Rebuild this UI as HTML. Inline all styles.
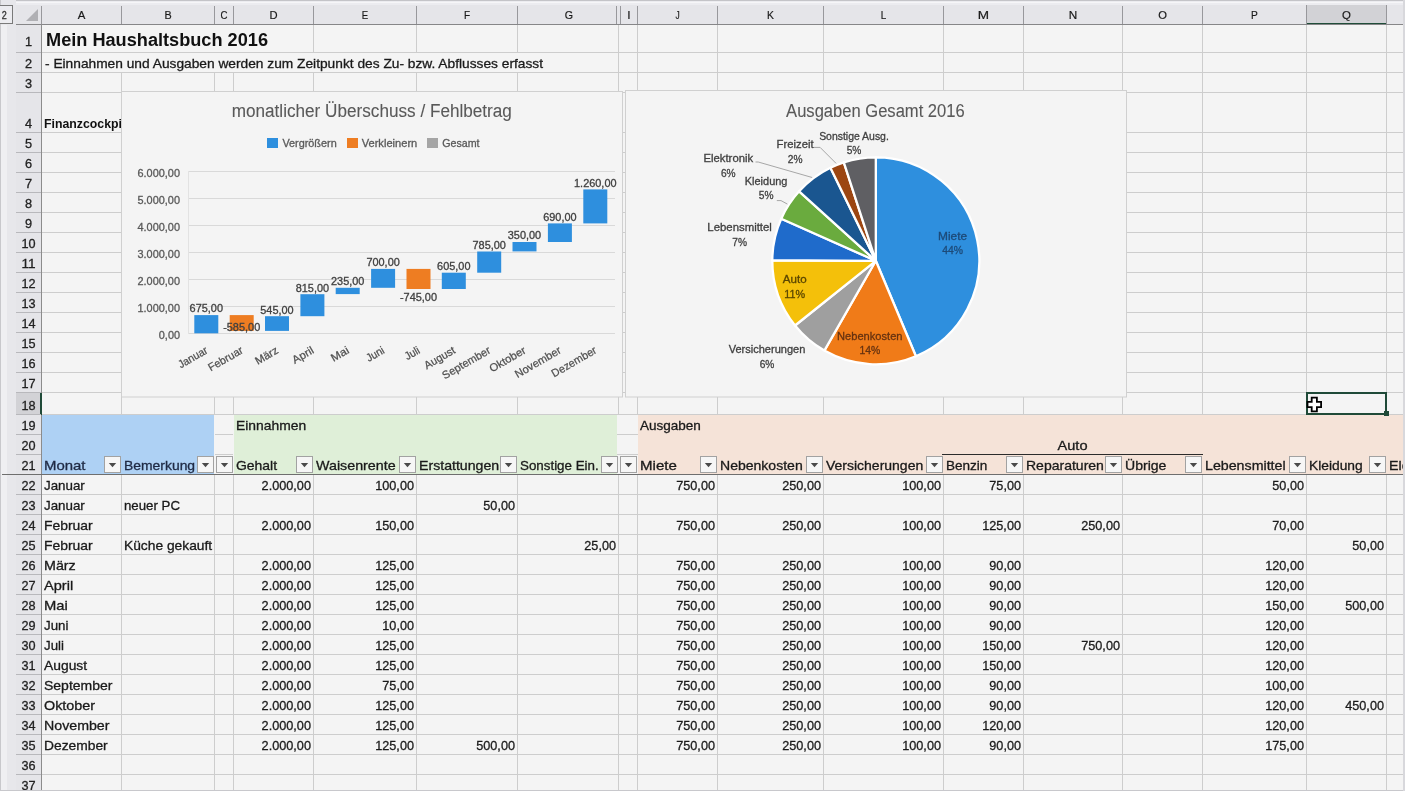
<!DOCTYPE html>
<html><head><meta charset="utf-8"><style>
html,body{margin:0;padding:0;width:1405px;height:791px;overflow:hidden;background:#f4f4f4}
svg{display:block;font-family:"Liberation Sans",sans-serif;will-change:transform}
</style></head><body>
<svg width="1405" height="791" viewBox="0 0 1405 791">
<rect x="0" y="0" width="1405" height="791" fill="#f4f4f4"/>
<rect x="41" y="52" width="1362" height="1" fill="#cdcdcd"/>
<rect x="41" y="72" width="1362" height="1" fill="#cdcdcd"/>
<rect x="41" y="92" width="1362" height="1" fill="#cdcdcd"/>
<rect x="41" y="132" width="1362" height="1" fill="#cdcdcd"/>
<rect x="41" y="152" width="1362" height="1" fill="#cdcdcd"/>
<rect x="41" y="172" width="1362" height="1" fill="#cdcdcd"/>
<rect x="41" y="192" width="1362" height="1" fill="#cdcdcd"/>
<rect x="41" y="212" width="1362" height="1" fill="#cdcdcd"/>
<rect x="41" y="232" width="1362" height="1" fill="#cdcdcd"/>
<rect x="41" y="252" width="1362" height="1" fill="#cdcdcd"/>
<rect x="41" y="272" width="1362" height="1" fill="#cdcdcd"/>
<rect x="41" y="292" width="1362" height="1" fill="#cdcdcd"/>
<rect x="41" y="312" width="1362" height="1" fill="#cdcdcd"/>
<rect x="41" y="332" width="1362" height="1" fill="#cdcdcd"/>
<rect x="41" y="352" width="1362" height="1" fill="#cdcdcd"/>
<rect x="41" y="372" width="1362" height="1" fill="#cdcdcd"/>
<rect x="41" y="392" width="1362" height="1" fill="#cdcdcd"/>
<rect x="41" y="414" width="1362" height="1" fill="#cdcdcd"/>
<rect x="41" y="434" width="1362" height="1" fill="#cdcdcd"/>
<rect x="41" y="454" width="1362" height="1" fill="#cdcdcd"/>
<rect x="41" y="474" width="1362" height="1" fill="#cdcdcd"/>
<rect x="41" y="494" width="1362" height="1" fill="#cdcdcd"/>
<rect x="41" y="514" width="1362" height="1" fill="#cdcdcd"/>
<rect x="41" y="534" width="1362" height="1" fill="#cdcdcd"/>
<rect x="41" y="554" width="1362" height="1" fill="#cdcdcd"/>
<rect x="41" y="574" width="1362" height="1" fill="#cdcdcd"/>
<rect x="41" y="594" width="1362" height="1" fill="#cdcdcd"/>
<rect x="41" y="614" width="1362" height="1" fill="#cdcdcd"/>
<rect x="41" y="634" width="1362" height="1" fill="#cdcdcd"/>
<rect x="41" y="654" width="1362" height="1" fill="#cdcdcd"/>
<rect x="41" y="674" width="1362" height="1" fill="#cdcdcd"/>
<rect x="41" y="694" width="1362" height="1" fill="#cdcdcd"/>
<rect x="41" y="714" width="1362" height="1" fill="#cdcdcd"/>
<rect x="41" y="734" width="1362" height="1" fill="#cdcdcd"/>
<rect x="41" y="754" width="1362" height="1" fill="#cdcdcd"/>
<rect x="41" y="774" width="1362" height="1" fill="#cdcdcd"/>
<rect x="121" y="25" width="1" height="766" fill="#cdcdcd"/>
<rect x="214" y="25" width="1" height="766" fill="#cdcdcd"/>
<rect x="233" y="25" width="1" height="766" fill="#cdcdcd"/>
<rect x="313" y="25" width="1" height="766" fill="#cdcdcd"/>
<rect x="416" y="25" width="1" height="766" fill="#cdcdcd"/>
<rect x="517" y="25" width="1" height="766" fill="#cdcdcd"/>
<rect x="618" y="25" width="1" height="766" fill="#cdcdcd"/>
<rect x="637" y="25" width="1" height="766" fill="#cdcdcd"/>
<rect x="717" y="25" width="1" height="766" fill="#cdcdcd"/>
<rect x="823" y="25" width="1" height="766" fill="#cdcdcd"/>
<rect x="943" y="25" width="1" height="766" fill="#cdcdcd"/>
<rect x="1023" y="25" width="1" height="766" fill="#cdcdcd"/>
<rect x="1122" y="25" width="1" height="766" fill="#cdcdcd"/>
<rect x="1202" y="25" width="1" height="766" fill="#cdcdcd"/>
<rect x="1306" y="25" width="1" height="766" fill="#cdcdcd"/>
<rect x="1386" y="25" width="1" height="766" fill="#cdcdcd"/>
<rect x="42" y="25" width="228" height="27" fill="#f4f4f4"/>
<rect x="42" y="53" width="503" height="19" fill="#f4f4f4"/>
<rect x="42" y="415" width="173" height="59" fill="#aed1f4"/>
<rect x="233" y="415" width="384" height="59" fill="#dfefd8"/>
<rect x="617" y="415" width="21" height="59" fill="#f4f4f4"/>
<rect x="214" y="415" width="20" height="59" fill="#f4f4f4"/>
<rect x="215" y="434" width="18" height="1" fill="#cdcdcd"/>
<rect x="617" y="434" width="21" height="1" fill="#cdcdcd"/>
<rect x="215" y="454" width="18" height="1" fill="#cdcdcd"/>
<rect x="617" y="454" width="21" height="1" fill="#cdcdcd"/>
<rect x="638" y="415" width="765" height="59" fill="#f5e3d8"/>
<text x="46.0" y="45.6" font-size="17.6" fill="#111" font-weight="bold" textLength="222.0" lengthAdjust="spacingAndGlyphs">Mein Haushaltsbuch 2016</text>
<text x="45.0" y="67.5" font-size="13" fill="#1a1a1a" textLength="498.0" lengthAdjust="spacingAndGlyphs" stroke="#1a1a1a" stroke-width="0.3">- Einnahmen und Ausgaben werden zum Zeitpunkt des Zu- bzw. Abflusses erfasst</text>
<text x="44.0" y="128.0" font-size="13" fill="#111" font-weight="bold" textLength="82.0" lengthAdjust="spacingAndGlyphs">Finanzcockpit</text>
<text x="236.0" y="430.0" font-size="13" fill="#1a1a1a" textLength="70.1" lengthAdjust="spacingAndGlyphs" stroke="#1a1a1a" stroke-width="0.3">Einnahmen</text>
<text x="640.0" y="430.0" font-size="13" fill="#1a1a1a" textLength="60.9" lengthAdjust="spacingAndGlyphs" stroke="#1a1a1a" stroke-width="0.3">Ausgaben</text>
<text x="1072.5" y="449.5" font-size="13" fill="#1a1a1a" text-anchor="middle" textLength="30.0" lengthAdjust="spacingAndGlyphs" stroke="#1a1a1a" stroke-width="0.3">Auto</text>
<rect x="942" y="454" width="261" height="1" fill="#2b2b2b"/>
<text x="44.0" y="470.0" font-size="13" fill="#1f2a44" textLength="41.5" lengthAdjust="spacingAndGlyphs" stroke="#1f2a44" stroke-width="0.3">Monat</text>
<rect x="104.5" y="456.5" width="16" height="16" fill="#f6f6f6" stroke="#a2a2a2" stroke-width="1"/>
<path d="M108.8,463 h7.4 l-3.7,4.2 z" fill="#4a4a4a"/>
<text x="124.0" y="470.0" font-size="13" fill="#1f2a44" textLength="71.1" lengthAdjust="spacingAndGlyphs" stroke="#1f2a44" stroke-width="0.3">Bemerkung</text>
<rect x="197.5" y="456.5" width="16" height="16" fill="#f6f6f6" stroke="#a2a2a2" stroke-width="1"/>
<path d="M201.8,463 h7.4 l-3.7,4.2 z" fill="#4a4a4a"/>
<rect x="216.5" y="456.5" width="16" height="16" fill="#f6f6f6" stroke="#a2a2a2" stroke-width="1"/>
<path d="M220.8,463 h7.4 l-3.7,4.2 z" fill="#4a4a4a"/>
<text x="236.0" y="470.0" font-size="13" fill="#1a1a1a" textLength="41.1" lengthAdjust="spacingAndGlyphs" stroke="#1a1a1a" stroke-width="0.3">Gehalt</text>
<rect x="296.5" y="456.5" width="16" height="16" fill="#f6f6f6" stroke="#a2a2a2" stroke-width="1"/>
<path d="M300.8,463 h7.4 l-3.7,4.2 z" fill="#4a4a4a"/>
<text x="316.0" y="470.0" font-size="13" fill="#1a1a1a" textLength="79.6" lengthAdjust="spacingAndGlyphs" stroke="#1a1a1a" stroke-width="0.3">Waisenrente</text>
<rect x="399.5" y="456.5" width="16" height="16" fill="#f6f6f6" stroke="#a2a2a2" stroke-width="1"/>
<path d="M403.8,463 h7.4 l-3.7,4.2 z" fill="#4a4a4a"/>
<text x="419.0" y="470.0" font-size="13" fill="#1a1a1a" textLength="80.2" lengthAdjust="spacingAndGlyphs" stroke="#1a1a1a" stroke-width="0.3">Erstattungen</text>
<rect x="500.5" y="456.5" width="16" height="16" fill="#f6f6f6" stroke="#a2a2a2" stroke-width="1"/>
<path d="M504.8,463 h7.4 l-3.7,4.2 z" fill="#4a4a4a"/>
<text x="520.0" y="470.0" font-size="13" fill="#1a1a1a" textLength="78.7" lengthAdjust="spacingAndGlyphs" stroke="#1a1a1a" stroke-width="0.3">Sonstige Ein.</text>
<rect x="601.5" y="456.5" width="16" height="16" fill="#f6f6f6" stroke="#a2a2a2" stroke-width="1"/>
<path d="M605.8,463 h7.4 l-3.7,4.2 z" fill="#4a4a4a"/>
<rect x="620.5" y="456.5" width="16" height="16" fill="#f6f6f6" stroke="#a2a2a2" stroke-width="1"/>
<path d="M624.8,463 h7.4 l-3.7,4.2 z" fill="#4a4a4a"/>
<text x="640.0" y="470.0" font-size="13" fill="#1a1a1a" textLength="36.8" lengthAdjust="spacingAndGlyphs" stroke="#1a1a1a" stroke-width="0.3">Miete</text>
<rect x="700.5" y="456.5" width="16" height="16" fill="#f6f6f6" stroke="#a2a2a2" stroke-width="1"/>
<path d="M704.8,463 h7.4 l-3.7,4.2 z" fill="#4a4a4a"/>
<text x="720.0" y="470.0" font-size="13" fill="#1a1a1a" textLength="82.7" lengthAdjust="spacingAndGlyphs" stroke="#1a1a1a" stroke-width="0.3">Nebenkosten</text>
<rect x="806.5" y="456.5" width="16" height="16" fill="#f6f6f6" stroke="#a2a2a2" stroke-width="1"/>
<path d="M810.8,463 h7.4 l-3.7,4.2 z" fill="#4a4a4a"/>
<text x="826.0" y="470.0" font-size="13" fill="#1a1a1a" textLength="97.2" lengthAdjust="spacingAndGlyphs" stroke="#1a1a1a" stroke-width="0.3">Versicherungen</text>
<rect x="926.5" y="456.5" width="16" height="16" fill="#f6f6f6" stroke="#a2a2a2" stroke-width="1"/>
<path d="M930.8,463 h7.4 l-3.7,4.2 z" fill="#4a4a4a"/>
<text x="946.0" y="470.0" font-size="13" fill="#1a1a1a" textLength="41.4" lengthAdjust="spacingAndGlyphs" stroke="#1a1a1a" stroke-width="0.3">Benzin</text>
<rect x="1006.5" y="456.5" width="16" height="16" fill="#f6f6f6" stroke="#a2a2a2" stroke-width="1"/>
<path d="M1010.8,463 h7.4 l-3.7,4.2 z" fill="#4a4a4a"/>
<text x="1026.0" y="470.0" font-size="13" fill="#1a1a1a" textLength="77.9" lengthAdjust="spacingAndGlyphs" stroke="#1a1a1a" stroke-width="0.3">Reparaturen</text>
<rect x="1105.5" y="456.5" width="16" height="16" fill="#f6f6f6" stroke="#a2a2a2" stroke-width="1"/>
<path d="M1109.8,463 h7.4 l-3.7,4.2 z" fill="#4a4a4a"/>
<text x="1125.0" y="470.0" font-size="13" fill="#1a1a1a" textLength="41.4" lengthAdjust="spacingAndGlyphs" stroke="#1a1a1a" stroke-width="0.3">Übrige</text>
<rect x="1185.5" y="456.5" width="16" height="16" fill="#f6f6f6" stroke="#a2a2a2" stroke-width="1"/>
<path d="M1189.8,463 h7.4 l-3.7,4.2 z" fill="#4a4a4a"/>
<text x="1205.0" y="470.0" font-size="13" fill="#1a1a1a" textLength="80.6" lengthAdjust="spacingAndGlyphs" stroke="#1a1a1a" stroke-width="0.3">Lebensmittel</text>
<rect x="1289.5" y="456.5" width="16" height="16" fill="#f6f6f6" stroke="#a2a2a2" stroke-width="1"/>
<path d="M1293.8,463 h7.4 l-3.7,4.2 z" fill="#4a4a4a"/>
<text x="1309.0" y="470.0" font-size="13" fill="#1a1a1a" textLength="53.7" lengthAdjust="spacingAndGlyphs" stroke="#1a1a1a" stroke-width="0.3">Kleidung</text>
<rect x="1369.5" y="456.5" width="16" height="16" fill="#f6f6f6" stroke="#a2a2a2" stroke-width="1"/>
<path d="M1373.8,463 h7.4 l-3.7,4.2 z" fill="#4a4a4a"/>
<text x="1389.0" y="470.0" font-size="13" fill="#1a1a1a" textLength="62.4" lengthAdjust="spacingAndGlyphs" stroke="#1a1a1a" stroke-width="0.3">Elektronik</text>
<text x="44.0" y="490.0" font-size="13" fill="#1a1a1a" textLength="40.8" lengthAdjust="spacingAndGlyphs" stroke="#1a1a1a" stroke-width="0.3">Januar</text>
<text x="311.0" y="490.0" font-size="13" fill="#1a1a1a" text-anchor="end" textLength="49.4" lengthAdjust="spacingAndGlyphs" stroke="#1a1a1a" stroke-width="0.3">2.000,00</text>
<text x="414.0" y="490.0" font-size="13" fill="#1a1a1a" text-anchor="end" textLength="38.8" lengthAdjust="spacingAndGlyphs" stroke="#1a1a1a" stroke-width="0.3">100,00</text>
<text x="715.0" y="490.0" font-size="13" fill="#1a1a1a" text-anchor="end" textLength="38.8" lengthAdjust="spacingAndGlyphs" stroke="#1a1a1a" stroke-width="0.3">750,00</text>
<text x="821.0" y="490.0" font-size="13" fill="#1a1a1a" text-anchor="end" textLength="38.8" lengthAdjust="spacingAndGlyphs" stroke="#1a1a1a" stroke-width="0.3">250,00</text>
<text x="941.0" y="490.0" font-size="13" fill="#1a1a1a" text-anchor="end" textLength="38.8" lengthAdjust="spacingAndGlyphs" stroke="#1a1a1a" stroke-width="0.3">100,00</text>
<text x="1021.0" y="490.0" font-size="13" fill="#1a1a1a" text-anchor="end" textLength="31.7" lengthAdjust="spacingAndGlyphs" stroke="#1a1a1a" stroke-width="0.3">75,00</text>
<text x="1304.0" y="490.0" font-size="13" fill="#1a1a1a" text-anchor="end" textLength="31.7" lengthAdjust="spacingAndGlyphs" stroke="#1a1a1a" stroke-width="0.3">50,00</text>
<text x="44.0" y="510.0" font-size="13" fill="#1a1a1a" textLength="40.8" lengthAdjust="spacingAndGlyphs" stroke="#1a1a1a" stroke-width="0.3">Januar</text>
<text x="124.0" y="510.0" font-size="13" fill="#1a1a1a" textLength="56.0" lengthAdjust="spacingAndGlyphs" stroke="#1a1a1a" stroke-width="0.3">neuer PC</text>
<text x="515.0" y="510.0" font-size="13" fill="#1a1a1a" text-anchor="end" textLength="31.7" lengthAdjust="spacingAndGlyphs" stroke="#1a1a1a" stroke-width="0.3">50,00</text>
<text x="44.0" y="530.0" font-size="13" fill="#1a1a1a" textLength="48.6" lengthAdjust="spacingAndGlyphs" stroke="#1a1a1a" stroke-width="0.3">Februar</text>
<text x="311.0" y="530.0" font-size="13" fill="#1a1a1a" text-anchor="end" textLength="49.4" lengthAdjust="spacingAndGlyphs" stroke="#1a1a1a" stroke-width="0.3">2.000,00</text>
<text x="414.0" y="530.0" font-size="13" fill="#1a1a1a" text-anchor="end" textLength="38.8" lengthAdjust="spacingAndGlyphs" stroke="#1a1a1a" stroke-width="0.3">150,00</text>
<text x="715.0" y="530.0" font-size="13" fill="#1a1a1a" text-anchor="end" textLength="38.8" lengthAdjust="spacingAndGlyphs" stroke="#1a1a1a" stroke-width="0.3">750,00</text>
<text x="821.0" y="530.0" font-size="13" fill="#1a1a1a" text-anchor="end" textLength="38.8" lengthAdjust="spacingAndGlyphs" stroke="#1a1a1a" stroke-width="0.3">250,00</text>
<text x="941.0" y="530.0" font-size="13" fill="#1a1a1a" text-anchor="end" textLength="38.8" lengthAdjust="spacingAndGlyphs" stroke="#1a1a1a" stroke-width="0.3">100,00</text>
<text x="1021.0" y="530.0" font-size="13" fill="#1a1a1a" text-anchor="end" textLength="38.8" lengthAdjust="spacingAndGlyphs" stroke="#1a1a1a" stroke-width="0.3">125,00</text>
<text x="1120.0" y="530.0" font-size="13" fill="#1a1a1a" text-anchor="end" textLength="38.8" lengthAdjust="spacingAndGlyphs" stroke="#1a1a1a" stroke-width="0.3">250,00</text>
<text x="1304.0" y="530.0" font-size="13" fill="#1a1a1a" text-anchor="end" textLength="31.7" lengthAdjust="spacingAndGlyphs" stroke="#1a1a1a" stroke-width="0.3">70,00</text>
<text x="44.0" y="550.0" font-size="13" fill="#1a1a1a" textLength="48.6" lengthAdjust="spacingAndGlyphs" stroke="#1a1a1a" stroke-width="0.3">Februar</text>
<text x="124.0" y="550.0" font-size="13" fill="#1a1a1a" textLength="88.2" lengthAdjust="spacingAndGlyphs" stroke="#1a1a1a" stroke-width="0.3">Küche gekauft</text>
<text x="616.0" y="550.0" font-size="13" fill="#1a1a1a" text-anchor="end" textLength="31.7" lengthAdjust="spacingAndGlyphs" stroke="#1a1a1a" stroke-width="0.3">25,00</text>
<text x="1384.0" y="550.0" font-size="13" fill="#1a1a1a" text-anchor="end" textLength="31.7" lengthAdjust="spacingAndGlyphs" stroke="#1a1a1a" stroke-width="0.3">50,00</text>
<text x="44.0" y="570.0" font-size="13" fill="#1a1a1a" textLength="31.7" lengthAdjust="spacingAndGlyphs" stroke="#1a1a1a" stroke-width="0.3">März</text>
<text x="311.0" y="570.0" font-size="13" fill="#1a1a1a" text-anchor="end" textLength="49.4" lengthAdjust="spacingAndGlyphs" stroke="#1a1a1a" stroke-width="0.3">2.000,00</text>
<text x="414.0" y="570.0" font-size="13" fill="#1a1a1a" text-anchor="end" textLength="38.8" lengthAdjust="spacingAndGlyphs" stroke="#1a1a1a" stroke-width="0.3">125,00</text>
<text x="715.0" y="570.0" font-size="13" fill="#1a1a1a" text-anchor="end" textLength="38.8" lengthAdjust="spacingAndGlyphs" stroke="#1a1a1a" stroke-width="0.3">750,00</text>
<text x="821.0" y="570.0" font-size="13" fill="#1a1a1a" text-anchor="end" textLength="38.8" lengthAdjust="spacingAndGlyphs" stroke="#1a1a1a" stroke-width="0.3">250,00</text>
<text x="941.0" y="570.0" font-size="13" fill="#1a1a1a" text-anchor="end" textLength="38.8" lengthAdjust="spacingAndGlyphs" stroke="#1a1a1a" stroke-width="0.3">100,00</text>
<text x="1021.0" y="570.0" font-size="13" fill="#1a1a1a" text-anchor="end" textLength="31.7" lengthAdjust="spacingAndGlyphs" stroke="#1a1a1a" stroke-width="0.3">90,00</text>
<text x="1304.0" y="570.0" font-size="13" fill="#1a1a1a" text-anchor="end" textLength="38.8" lengthAdjust="spacingAndGlyphs" stroke="#1a1a1a" stroke-width="0.3">120,00</text>
<text x="44.0" y="590.0" font-size="13" fill="#1a1a1a" textLength="29.2" lengthAdjust="spacingAndGlyphs" stroke="#1a1a1a" stroke-width="0.3">April</text>
<text x="311.0" y="590.0" font-size="13" fill="#1a1a1a" text-anchor="end" textLength="49.4" lengthAdjust="spacingAndGlyphs" stroke="#1a1a1a" stroke-width="0.3">2.000,00</text>
<text x="414.0" y="590.0" font-size="13" fill="#1a1a1a" text-anchor="end" textLength="38.8" lengthAdjust="spacingAndGlyphs" stroke="#1a1a1a" stroke-width="0.3">125,00</text>
<text x="715.0" y="590.0" font-size="13" fill="#1a1a1a" text-anchor="end" textLength="38.8" lengthAdjust="spacingAndGlyphs" stroke="#1a1a1a" stroke-width="0.3">750,00</text>
<text x="821.0" y="590.0" font-size="13" fill="#1a1a1a" text-anchor="end" textLength="38.8" lengthAdjust="spacingAndGlyphs" stroke="#1a1a1a" stroke-width="0.3">250,00</text>
<text x="941.0" y="590.0" font-size="13" fill="#1a1a1a" text-anchor="end" textLength="38.8" lengthAdjust="spacingAndGlyphs" stroke="#1a1a1a" stroke-width="0.3">100,00</text>
<text x="1021.0" y="590.0" font-size="13" fill="#1a1a1a" text-anchor="end" textLength="31.7" lengthAdjust="spacingAndGlyphs" stroke="#1a1a1a" stroke-width="0.3">90,00</text>
<text x="1304.0" y="590.0" font-size="13" fill="#1a1a1a" text-anchor="end" textLength="38.8" lengthAdjust="spacingAndGlyphs" stroke="#1a1a1a" stroke-width="0.3">120,00</text>
<text x="44.0" y="610.0" font-size="13" fill="#1a1a1a" textLength="23.8" lengthAdjust="spacingAndGlyphs" stroke="#1a1a1a" stroke-width="0.3">Mai</text>
<text x="311.0" y="610.0" font-size="13" fill="#1a1a1a" text-anchor="end" textLength="49.4" lengthAdjust="spacingAndGlyphs" stroke="#1a1a1a" stroke-width="0.3">2.000,00</text>
<text x="414.0" y="610.0" font-size="13" fill="#1a1a1a" text-anchor="end" textLength="38.8" lengthAdjust="spacingAndGlyphs" stroke="#1a1a1a" stroke-width="0.3">125,00</text>
<text x="715.0" y="610.0" font-size="13" fill="#1a1a1a" text-anchor="end" textLength="38.8" lengthAdjust="spacingAndGlyphs" stroke="#1a1a1a" stroke-width="0.3">750,00</text>
<text x="821.0" y="610.0" font-size="13" fill="#1a1a1a" text-anchor="end" textLength="38.8" lengthAdjust="spacingAndGlyphs" stroke="#1a1a1a" stroke-width="0.3">250,00</text>
<text x="941.0" y="610.0" font-size="13" fill="#1a1a1a" text-anchor="end" textLength="38.8" lengthAdjust="spacingAndGlyphs" stroke="#1a1a1a" stroke-width="0.3">100,00</text>
<text x="1021.0" y="610.0" font-size="13" fill="#1a1a1a" text-anchor="end" textLength="31.7" lengthAdjust="spacingAndGlyphs" stroke="#1a1a1a" stroke-width="0.3">90,00</text>
<text x="1304.0" y="610.0" font-size="13" fill="#1a1a1a" text-anchor="end" textLength="38.8" lengthAdjust="spacingAndGlyphs" stroke="#1a1a1a" stroke-width="0.3">150,00</text>
<text x="1384.0" y="610.0" font-size="13" fill="#1a1a1a" text-anchor="end" textLength="38.8" lengthAdjust="spacingAndGlyphs" stroke="#1a1a1a" stroke-width="0.3">500,00</text>
<text x="44.0" y="630.0" font-size="13" fill="#1a1a1a" textLength="24.4" lengthAdjust="spacingAndGlyphs" stroke="#1a1a1a" stroke-width="0.3">Juni</text>
<text x="311.0" y="630.0" font-size="13" fill="#1a1a1a" text-anchor="end" textLength="49.4" lengthAdjust="spacingAndGlyphs" stroke="#1a1a1a" stroke-width="0.3">2.000,00</text>
<text x="414.0" y="630.0" font-size="13" fill="#1a1a1a" text-anchor="end" textLength="31.7" lengthAdjust="spacingAndGlyphs" stroke="#1a1a1a" stroke-width="0.3">10,00</text>
<text x="715.0" y="630.0" font-size="13" fill="#1a1a1a" text-anchor="end" textLength="38.8" lengthAdjust="spacingAndGlyphs" stroke="#1a1a1a" stroke-width="0.3">750,00</text>
<text x="821.0" y="630.0" font-size="13" fill="#1a1a1a" text-anchor="end" textLength="38.8" lengthAdjust="spacingAndGlyphs" stroke="#1a1a1a" stroke-width="0.3">250,00</text>
<text x="941.0" y="630.0" font-size="13" fill="#1a1a1a" text-anchor="end" textLength="38.8" lengthAdjust="spacingAndGlyphs" stroke="#1a1a1a" stroke-width="0.3">100,00</text>
<text x="1021.0" y="630.0" font-size="13" fill="#1a1a1a" text-anchor="end" textLength="31.7" lengthAdjust="spacingAndGlyphs" stroke="#1a1a1a" stroke-width="0.3">90,00</text>
<text x="1304.0" y="630.0" font-size="13" fill="#1a1a1a" text-anchor="end" textLength="38.8" lengthAdjust="spacingAndGlyphs" stroke="#1a1a1a" stroke-width="0.3">120,00</text>
<text x="44.0" y="650.0" font-size="13" fill="#1a1a1a" textLength="19.9" lengthAdjust="spacingAndGlyphs" stroke="#1a1a1a" stroke-width="0.3">Juli</text>
<text x="311.0" y="650.0" font-size="13" fill="#1a1a1a" text-anchor="end" textLength="49.4" lengthAdjust="spacingAndGlyphs" stroke="#1a1a1a" stroke-width="0.3">2.000,00</text>
<text x="414.0" y="650.0" font-size="13" fill="#1a1a1a" text-anchor="end" textLength="38.8" lengthAdjust="spacingAndGlyphs" stroke="#1a1a1a" stroke-width="0.3">125,00</text>
<text x="715.0" y="650.0" font-size="13" fill="#1a1a1a" text-anchor="end" textLength="38.8" lengthAdjust="spacingAndGlyphs" stroke="#1a1a1a" stroke-width="0.3">750,00</text>
<text x="821.0" y="650.0" font-size="13" fill="#1a1a1a" text-anchor="end" textLength="38.8" lengthAdjust="spacingAndGlyphs" stroke="#1a1a1a" stroke-width="0.3">250,00</text>
<text x="941.0" y="650.0" font-size="13" fill="#1a1a1a" text-anchor="end" textLength="38.8" lengthAdjust="spacingAndGlyphs" stroke="#1a1a1a" stroke-width="0.3">100,00</text>
<text x="1021.0" y="650.0" font-size="13" fill="#1a1a1a" text-anchor="end" textLength="38.8" lengthAdjust="spacingAndGlyphs" stroke="#1a1a1a" stroke-width="0.3">150,00</text>
<text x="1120.0" y="650.0" font-size="13" fill="#1a1a1a" text-anchor="end" textLength="38.8" lengthAdjust="spacingAndGlyphs" stroke="#1a1a1a" stroke-width="0.3">750,00</text>
<text x="1304.0" y="650.0" font-size="13" fill="#1a1a1a" text-anchor="end" textLength="38.8" lengthAdjust="spacingAndGlyphs" stroke="#1a1a1a" stroke-width="0.3">120,00</text>
<text x="44.0" y="670.0" font-size="13" fill="#1a1a1a" textLength="43.1" lengthAdjust="spacingAndGlyphs" stroke="#1a1a1a" stroke-width="0.3">August</text>
<text x="311.0" y="670.0" font-size="13" fill="#1a1a1a" text-anchor="end" textLength="49.4" lengthAdjust="spacingAndGlyphs" stroke="#1a1a1a" stroke-width="0.3">2.000,00</text>
<text x="414.0" y="670.0" font-size="13" fill="#1a1a1a" text-anchor="end" textLength="38.8" lengthAdjust="spacingAndGlyphs" stroke="#1a1a1a" stroke-width="0.3">125,00</text>
<text x="715.0" y="670.0" font-size="13" fill="#1a1a1a" text-anchor="end" textLength="38.8" lengthAdjust="spacingAndGlyphs" stroke="#1a1a1a" stroke-width="0.3">750,00</text>
<text x="821.0" y="670.0" font-size="13" fill="#1a1a1a" text-anchor="end" textLength="38.8" lengthAdjust="spacingAndGlyphs" stroke="#1a1a1a" stroke-width="0.3">250,00</text>
<text x="941.0" y="670.0" font-size="13" fill="#1a1a1a" text-anchor="end" textLength="38.8" lengthAdjust="spacingAndGlyphs" stroke="#1a1a1a" stroke-width="0.3">100,00</text>
<text x="1021.0" y="670.0" font-size="13" fill="#1a1a1a" text-anchor="end" textLength="38.8" lengthAdjust="spacingAndGlyphs" stroke="#1a1a1a" stroke-width="0.3">150,00</text>
<text x="1304.0" y="670.0" font-size="13" fill="#1a1a1a" text-anchor="end" textLength="38.8" lengthAdjust="spacingAndGlyphs" stroke="#1a1a1a" stroke-width="0.3">120,00</text>
<text x="44.0" y="690.0" font-size="13" fill="#1a1a1a" textLength="68.4" lengthAdjust="spacingAndGlyphs" stroke="#1a1a1a" stroke-width="0.3">September</text>
<text x="311.0" y="690.0" font-size="13" fill="#1a1a1a" text-anchor="end" textLength="49.4" lengthAdjust="spacingAndGlyphs" stroke="#1a1a1a" stroke-width="0.3">2.000,00</text>
<text x="414.0" y="690.0" font-size="13" fill="#1a1a1a" text-anchor="end" textLength="31.7" lengthAdjust="spacingAndGlyphs" stroke="#1a1a1a" stroke-width="0.3">75,00</text>
<text x="715.0" y="690.0" font-size="13" fill="#1a1a1a" text-anchor="end" textLength="38.8" lengthAdjust="spacingAndGlyphs" stroke="#1a1a1a" stroke-width="0.3">750,00</text>
<text x="821.0" y="690.0" font-size="13" fill="#1a1a1a" text-anchor="end" textLength="38.8" lengthAdjust="spacingAndGlyphs" stroke="#1a1a1a" stroke-width="0.3">250,00</text>
<text x="941.0" y="690.0" font-size="13" fill="#1a1a1a" text-anchor="end" textLength="38.8" lengthAdjust="spacingAndGlyphs" stroke="#1a1a1a" stroke-width="0.3">100,00</text>
<text x="1021.0" y="690.0" font-size="13" fill="#1a1a1a" text-anchor="end" textLength="31.7" lengthAdjust="spacingAndGlyphs" stroke="#1a1a1a" stroke-width="0.3">90,00</text>
<text x="1304.0" y="690.0" font-size="13" fill="#1a1a1a" text-anchor="end" textLength="38.8" lengthAdjust="spacingAndGlyphs" stroke="#1a1a1a" stroke-width="0.3">100,00</text>
<text x="44.0" y="710.0" font-size="13" fill="#1a1a1a" textLength="51.1" lengthAdjust="spacingAndGlyphs" stroke="#1a1a1a" stroke-width="0.3">Oktober</text>
<text x="311.0" y="710.0" font-size="13" fill="#1a1a1a" text-anchor="end" textLength="49.4" lengthAdjust="spacingAndGlyphs" stroke="#1a1a1a" stroke-width="0.3">2.000,00</text>
<text x="414.0" y="710.0" font-size="13" fill="#1a1a1a" text-anchor="end" textLength="38.8" lengthAdjust="spacingAndGlyphs" stroke="#1a1a1a" stroke-width="0.3">125,00</text>
<text x="715.0" y="710.0" font-size="13" fill="#1a1a1a" text-anchor="end" textLength="38.8" lengthAdjust="spacingAndGlyphs" stroke="#1a1a1a" stroke-width="0.3">750,00</text>
<text x="821.0" y="710.0" font-size="13" fill="#1a1a1a" text-anchor="end" textLength="38.8" lengthAdjust="spacingAndGlyphs" stroke="#1a1a1a" stroke-width="0.3">250,00</text>
<text x="941.0" y="710.0" font-size="13" fill="#1a1a1a" text-anchor="end" textLength="38.8" lengthAdjust="spacingAndGlyphs" stroke="#1a1a1a" stroke-width="0.3">100,00</text>
<text x="1021.0" y="710.0" font-size="13" fill="#1a1a1a" text-anchor="end" textLength="31.7" lengthAdjust="spacingAndGlyphs" stroke="#1a1a1a" stroke-width="0.3">90,00</text>
<text x="1304.0" y="710.0" font-size="13" fill="#1a1a1a" text-anchor="end" textLength="38.8" lengthAdjust="spacingAndGlyphs" stroke="#1a1a1a" stroke-width="0.3">120,00</text>
<text x="1384.0" y="710.0" font-size="13" fill="#1a1a1a" text-anchor="end" textLength="38.8" lengthAdjust="spacingAndGlyphs" stroke="#1a1a1a" stroke-width="0.3">450,00</text>
<text x="44.0" y="730.0" font-size="13" fill="#1a1a1a" textLength="65.5" lengthAdjust="spacingAndGlyphs" stroke="#1a1a1a" stroke-width="0.3">November</text>
<text x="311.0" y="730.0" font-size="13" fill="#1a1a1a" text-anchor="end" textLength="49.4" lengthAdjust="spacingAndGlyphs" stroke="#1a1a1a" stroke-width="0.3">2.000,00</text>
<text x="414.0" y="730.0" font-size="13" fill="#1a1a1a" text-anchor="end" textLength="38.8" lengthAdjust="spacingAndGlyphs" stroke="#1a1a1a" stroke-width="0.3">125,00</text>
<text x="715.0" y="730.0" font-size="13" fill="#1a1a1a" text-anchor="end" textLength="38.8" lengthAdjust="spacingAndGlyphs" stroke="#1a1a1a" stroke-width="0.3">750,00</text>
<text x="821.0" y="730.0" font-size="13" fill="#1a1a1a" text-anchor="end" textLength="38.8" lengthAdjust="spacingAndGlyphs" stroke="#1a1a1a" stroke-width="0.3">250,00</text>
<text x="941.0" y="730.0" font-size="13" fill="#1a1a1a" text-anchor="end" textLength="38.8" lengthAdjust="spacingAndGlyphs" stroke="#1a1a1a" stroke-width="0.3">100,00</text>
<text x="1021.0" y="730.0" font-size="13" fill="#1a1a1a" text-anchor="end" textLength="38.8" lengthAdjust="spacingAndGlyphs" stroke="#1a1a1a" stroke-width="0.3">120,00</text>
<text x="1304.0" y="730.0" font-size="13" fill="#1a1a1a" text-anchor="end" textLength="38.8" lengthAdjust="spacingAndGlyphs" stroke="#1a1a1a" stroke-width="0.3">120,00</text>
<text x="44.0" y="750.0" font-size="13" fill="#1a1a1a" textLength="63.7" lengthAdjust="spacingAndGlyphs" stroke="#1a1a1a" stroke-width="0.3">Dezember</text>
<text x="311.0" y="750.0" font-size="13" fill="#1a1a1a" text-anchor="end" textLength="49.4" lengthAdjust="spacingAndGlyphs" stroke="#1a1a1a" stroke-width="0.3">2.000,00</text>
<text x="414.0" y="750.0" font-size="13" fill="#1a1a1a" text-anchor="end" textLength="38.8" lengthAdjust="spacingAndGlyphs" stroke="#1a1a1a" stroke-width="0.3">125,00</text>
<text x="515.0" y="750.0" font-size="13" fill="#1a1a1a" text-anchor="end" textLength="38.8" lengthAdjust="spacingAndGlyphs" stroke="#1a1a1a" stroke-width="0.3">500,00</text>
<text x="715.0" y="750.0" font-size="13" fill="#1a1a1a" text-anchor="end" textLength="38.8" lengthAdjust="spacingAndGlyphs" stroke="#1a1a1a" stroke-width="0.3">750,00</text>
<text x="821.0" y="750.0" font-size="13" fill="#1a1a1a" text-anchor="end" textLength="38.8" lengthAdjust="spacingAndGlyphs" stroke="#1a1a1a" stroke-width="0.3">250,00</text>
<text x="941.0" y="750.0" font-size="13" fill="#1a1a1a" text-anchor="end" textLength="38.8" lengthAdjust="spacingAndGlyphs" stroke="#1a1a1a" stroke-width="0.3">100,00</text>
<text x="1021.0" y="750.0" font-size="13" fill="#1a1a1a" text-anchor="end" textLength="31.7" lengthAdjust="spacingAndGlyphs" stroke="#1a1a1a" stroke-width="0.3">90,00</text>
<text x="1304.0" y="750.0" font-size="13" fill="#1a1a1a" text-anchor="end" textLength="38.8" lengthAdjust="spacingAndGlyphs" stroke="#1a1a1a" stroke-width="0.3">175,00</text>
<rect x="121.5" y="91.5" width="501" height="305.5" fill="#f4f4f4" stroke="#d0d0d0" stroke-width="1"/>
<text x="371.8" y="116.8" font-size="18" fill="#595959" text-anchor="middle" textLength="280.2" lengthAdjust="spacingAndGlyphs" stroke="#595959" stroke-width="0.1">monatlicher Überschuss / Fehlbetrag</text>
<rect x="267" y="138" width="11" height="10" fill="#2e8fde"/>
<text x="282.4" y="146.8" font-size="11" fill="#595959" textLength="54.3" lengthAdjust="spacingAndGlyphs" stroke="#595959" stroke-width="0.3">Vergrößern</text>
<rect x="347" y="138" width="11" height="10" fill="#ee7d22"/>
<text x="361.7" y="146.8" font-size="11" fill="#595959" textLength="55.6" lengthAdjust="spacingAndGlyphs" stroke="#595959" stroke-width="0.3">Verkleinern</text>
<rect x="427" y="138" width="11" height="10" fill="#a5a5a5"/>
<text x="442.2" y="146.8" font-size="11" fill="#595959" textLength="37.3" lengthAdjust="spacingAndGlyphs" stroke="#595959" stroke-width="0.3">Gesamt</text>
<rect x="188" y="333" width="427" height="1" fill="#d9d9d9"/>
<text x="180.0" y="338.5" font-size="11" fill="#595959" text-anchor="end" textLength="21.2" lengthAdjust="spacingAndGlyphs" stroke="#595959" stroke-width="0.3">0,00</text>
<rect x="188" y="306" width="427" height="1" fill="#d9d9d9"/>
<text x="180.0" y="311.5" font-size="11" fill="#595959" text-anchor="end" textLength="42.5" lengthAdjust="spacingAndGlyphs" stroke="#595959" stroke-width="0.3">1.000,00</text>
<rect x="188" y="279" width="427" height="1" fill="#d9d9d9"/>
<text x="180.0" y="284.5" font-size="11" fill="#595959" text-anchor="end" textLength="42.5" lengthAdjust="spacingAndGlyphs" stroke="#595959" stroke-width="0.3">2.000,00</text>
<rect x="188" y="252" width="427" height="1" fill="#d9d9d9"/>
<text x="180.0" y="257.5" font-size="11" fill="#595959" text-anchor="end" textLength="42.5" lengthAdjust="spacingAndGlyphs" stroke="#595959" stroke-width="0.3">3.000,00</text>
<rect x="188" y="225" width="427" height="1" fill="#d9d9d9"/>
<text x="180.0" y="230.5" font-size="11" fill="#595959" text-anchor="end" textLength="42.5" lengthAdjust="spacingAndGlyphs" stroke="#595959" stroke-width="0.3">4.000,00</text>
<rect x="188" y="198" width="427" height="1" fill="#d9d9d9"/>
<text x="180.0" y="203.5" font-size="11" fill="#595959" text-anchor="end" textLength="42.5" lengthAdjust="spacingAndGlyphs" stroke="#595959" stroke-width="0.3">5.000,00</text>
<rect x="188" y="171" width="427" height="1" fill="#d9d9d9"/>
<text x="180.0" y="176.5" font-size="11" fill="#595959" text-anchor="end" textLength="42.5" lengthAdjust="spacingAndGlyphs" stroke="#595959" stroke-width="0.3">6.000,00</text>
<rect x="188" y="171" width="1" height="163" fill="#e2e2e2"/>
<rect x="194.3" y="315.1" width="24" height="18.2" fill="#2e8fde"/>
<text x="206.3" y="312.4" font-size="11" fill="#404040" text-anchor="middle" textLength="33.4" lengthAdjust="spacingAndGlyphs" stroke="#404040" stroke-width="0.3">675,00</text>
<text transform="translate(208.5,352.5) rotate(-30)" text-anchor="end" font-size="11" fill="#505050" stroke="#505050" stroke-width="0.25" textLength="32.1" lengthAdjust="spacingAndGlyphs">Januar</text>
<rect x="229.7" y="315.1" width="24" height="15.8" fill="#ee7d22"/>
<text x="241.7" y="330.5" font-size="11" fill="#404040" text-anchor="middle" textLength="37.1" lengthAdjust="spacingAndGlyphs" stroke="#404040" stroke-width="0.3">-585,00</text>
<text transform="translate(243.9,352.5) rotate(-30)" text-anchor="end" font-size="11" fill="#505050" stroke="#505050" stroke-width="0.25" textLength="38.2" lengthAdjust="spacingAndGlyphs">Februar</text>
<rect x="265.0" y="316.2" width="24" height="14.7" fill="#2e8fde"/>
<text x="277.0" y="313.5" font-size="11" fill="#404040" text-anchor="middle" textLength="33.4" lengthAdjust="spacingAndGlyphs" stroke="#404040" stroke-width="0.3">545,00</text>
<text transform="translate(279.2,352.5) rotate(-30)" text-anchor="end" font-size="11" fill="#505050" stroke="#505050" stroke-width="0.25" textLength="24.9" lengthAdjust="spacingAndGlyphs">März</text>
<rect x="300.4" y="294.2" width="24" height="22.0" fill="#2e8fde"/>
<text x="312.4" y="291.5" font-size="11" fill="#404040" text-anchor="middle" textLength="33.4" lengthAdjust="spacingAndGlyphs" stroke="#404040" stroke-width="0.3">815,00</text>
<text transform="translate(314.6,352.5) rotate(-30)" text-anchor="end" font-size="11" fill="#505050" stroke="#505050" stroke-width="0.25" textLength="22.9" lengthAdjust="spacingAndGlyphs">April</text>
<rect x="335.7" y="287.8" width="24" height="6.3" fill="#2e8fde"/>
<text x="347.7" y="285.1" font-size="11" fill="#404040" text-anchor="middle" textLength="33.4" lengthAdjust="spacingAndGlyphs" stroke="#404040" stroke-width="0.3">235,00</text>
<text transform="translate(349.9,352.5) rotate(-30)" text-anchor="end" font-size="11" fill="#505050" stroke="#505050" stroke-width="0.25" textLength="18.8" lengthAdjust="spacingAndGlyphs">Mai</text>
<rect x="371.1" y="268.9" width="24" height="18.9" fill="#2e8fde"/>
<text x="383.1" y="266.2" font-size="11" fill="#404040" text-anchor="middle" textLength="33.4" lengthAdjust="spacingAndGlyphs" stroke="#404040" stroke-width="0.3">700,00</text>
<text transform="translate(385.3,352.5) rotate(-30)" text-anchor="end" font-size="11" fill="#505050" stroke="#505050" stroke-width="0.25" textLength="19.2" lengthAdjust="spacingAndGlyphs">Juni</text>
<rect x="406.5" y="268.9" width="24" height="20.1" fill="#ee7d22"/>
<text x="418.5" y="300.5" font-size="11" fill="#404040" text-anchor="middle" textLength="37.1" lengthAdjust="spacingAndGlyphs" stroke="#404040" stroke-width="0.3">-745,00</text>
<text transform="translate(420.7,352.5) rotate(-30)" text-anchor="end" font-size="11" fill="#505050" stroke="#505050" stroke-width="0.25" textLength="15.6" lengthAdjust="spacingAndGlyphs">Juli</text>
<rect x="441.8" y="272.7" width="24" height="16.3" fill="#2e8fde"/>
<text x="453.8" y="270.0" font-size="11" fill="#404040" text-anchor="middle" textLength="33.4" lengthAdjust="spacingAndGlyphs" stroke="#404040" stroke-width="0.3">605,00</text>
<text transform="translate(456.0,352.5) rotate(-30)" text-anchor="end" font-size="11" fill="#505050" stroke="#505050" stroke-width="0.25" textLength="33.9" lengthAdjust="spacingAndGlyphs">August</text>
<rect x="477.2" y="251.5" width="24" height="21.2" fill="#2e8fde"/>
<text x="489.2" y="248.8" font-size="11" fill="#404040" text-anchor="middle" textLength="33.4" lengthAdjust="spacingAndGlyphs" stroke="#404040" stroke-width="0.3">785,00</text>
<text transform="translate(491.4,352.5) rotate(-30)" text-anchor="end" font-size="11" fill="#505050" stroke="#505050" stroke-width="0.25" textLength="53.8" lengthAdjust="spacingAndGlyphs">September</text>
<rect x="512.5" y="242.0" width="24" height="9.4" fill="#2e8fde"/>
<text x="524.5" y="239.3" font-size="11" fill="#404040" text-anchor="middle" textLength="33.4" lengthAdjust="spacingAndGlyphs" stroke="#404040" stroke-width="0.3">350,00</text>
<text transform="translate(526.7,352.5) rotate(-30)" text-anchor="end" font-size="11" fill="#505050" stroke="#505050" stroke-width="0.25" textLength="40.2" lengthAdjust="spacingAndGlyphs">Oktober</text>
<rect x="547.9" y="223.4" width="24" height="18.6" fill="#2e8fde"/>
<text x="559.9" y="220.7" font-size="11" fill="#404040" text-anchor="middle" textLength="33.4" lengthAdjust="spacingAndGlyphs" stroke="#404040" stroke-width="0.3">690,00</text>
<text transform="translate(562.1,352.5) rotate(-30)" text-anchor="end" font-size="11" fill="#505050" stroke="#505050" stroke-width="0.25" textLength="51.5" lengthAdjust="spacingAndGlyphs">November</text>
<rect x="583.3" y="189.4" width="24" height="34.0" fill="#2e8fde"/>
<text x="595.3" y="186.7" font-size="11" fill="#404040" text-anchor="middle" textLength="42.5" lengthAdjust="spacingAndGlyphs" stroke="#404040" stroke-width="0.3">1.260,00</text>
<text transform="translate(597.5,352.5) rotate(-30)" text-anchor="end" font-size="11" fill="#505050" stroke="#505050" stroke-width="0.25" textLength="50.1" lengthAdjust="spacingAndGlyphs">Dezember</text>
<rect x="625.5" y="90.5" width="501" height="306.5" fill="#f4f4f4" stroke="#d0d0d0" stroke-width="1"/>
<text x="875.4" y="117.2" font-size="18" fill="#595959" text-anchor="middle" textLength="178.6" lengthAdjust="spacingAndGlyphs" stroke="#595959" stroke-width="0.1">Ausgaben Gesamt 2016</text>
<path d="M875.80,260.80 L875.80,157.30 A103.5,103.5 0 0 1 915.91,356.21 Z" fill="#2e8fde" stroke="#ffffff" stroke-width="2.3" stroke-linejoin="round"/>
<path d="M875.80,260.80 L915.91,356.21 A103.5,103.5 0 0 1 824.36,350.61 Z" fill="#f07b18" stroke="#ffffff" stroke-width="2.3" stroke-linejoin="round"/>
<path d="M875.80,260.80 L824.36,350.61 A103.5,103.5 0 0 1 795.03,325.51 Z" fill="#9f9f9f" stroke="#ffffff" stroke-width="2.3" stroke-linejoin="round"/>
<path d="M875.80,260.80 L795.03,325.51 A103.5,103.5 0 0 1 772.30,260.26 Z" fill="#f4c00a" stroke="#ffffff" stroke-width="2.3" stroke-linejoin="round"/>
<path d="M875.80,260.80 L772.30,260.26 A103.5,103.5 0 0 1 781.25,218.70 Z" fill="#1f6bcb" stroke="#ffffff" stroke-width="2.3" stroke-linejoin="round"/>
<path d="M875.80,260.80 L781.25,218.70 A103.5,103.5 0 0 1 799.13,191.28 Z" fill="#6aab3e" stroke="#ffffff" stroke-width="2.3" stroke-linejoin="round"/>
<path d="M875.80,260.80 L799.13,191.28 A103.5,103.5 0 0 1 830.43,167.77 Z" fill="#1a5690" stroke="#ffffff" stroke-width="2.3" stroke-linejoin="round"/>
<path d="M875.80,260.80 L830.43,167.77 A103.5,103.5 0 0 1 843.82,162.37 Z" fill="#9c4612" stroke="#ffffff" stroke-width="2.3" stroke-linejoin="round"/>
<path d="M875.80,260.80 L843.82,162.37 A103.5,103.5 0 0 1 875.80,157.30 Z" fill="#5f5f63" stroke="#ffffff" stroke-width="2.3" stroke-linejoin="round"/>
<polyline points="813.9,147.4 820.1,147.4 836.1,163.4" fill="none" stroke="#a6a6a6" stroke-width="1"/>
<polyline points="755.5,162 758.2,162 812.2,177.5" fill="none" stroke="#a6a6a6" stroke-width="1"/>
<polyline points="776.8,200.6 781,200.6 787.4,204.1" fill="none" stroke="#a6a6a6" stroke-width="1"/>
<text x="854.0" y="139.7" font-size="11" fill="#404040" text-anchor="middle" textLength="69.7" lengthAdjust="spacingAndGlyphs" stroke="#404040" stroke-width="0.3">Sonstige Ausg.</text>
<text x="854.0" y="154.3" font-size="11" fill="#404040" text-anchor="middle" textLength="14.7" lengthAdjust="spacingAndGlyphs" stroke="#404040" stroke-width="0.3">5%</text>
<text x="795.1" y="148.0" font-size="11" fill="#404040" text-anchor="middle" textLength="37.0" lengthAdjust="spacingAndGlyphs" stroke="#404040" stroke-width="0.3">Freizeit</text>
<text x="795.1" y="162.6" font-size="11" fill="#404040" text-anchor="middle" textLength="14.7" lengthAdjust="spacingAndGlyphs" stroke="#404040" stroke-width="0.3">2%</text>
<text x="728.3" y="162.2" font-size="11" fill="#404040" text-anchor="middle" textLength="49.6" lengthAdjust="spacingAndGlyphs" stroke="#404040" stroke-width="0.3">Elektronik</text>
<text x="728.3" y="176.8" font-size="11" fill="#404040" text-anchor="middle" textLength="14.7" lengthAdjust="spacingAndGlyphs" stroke="#404040" stroke-width="0.3">6%</text>
<text x="766.1" y="184.8" font-size="11" fill="#404040" text-anchor="middle" textLength="42.6" lengthAdjust="spacingAndGlyphs" stroke="#404040" stroke-width="0.3">Kleidung</text>
<text x="766.1" y="199.4" font-size="11" fill="#404040" text-anchor="middle" textLength="14.7" lengthAdjust="spacingAndGlyphs" stroke="#404040" stroke-width="0.3">5%</text>
<text x="739.6" y="231.1" font-size="11" fill="#404040" text-anchor="middle" textLength="64.6" lengthAdjust="spacingAndGlyphs" stroke="#404040" stroke-width="0.3">Lebensmittel</text>
<text x="739.6" y="245.7" font-size="11" fill="#404040" text-anchor="middle" textLength="14.7" lengthAdjust="spacingAndGlyphs" stroke="#404040" stroke-width="0.3">7%</text>
<text x="794.7" y="283.3" font-size="11" fill="#5a4600" text-anchor="middle" textLength="23.8" lengthAdjust="spacingAndGlyphs" stroke="#5a4600" stroke-width="0.3">Auto</text>
<text x="794.7" y="297.9" font-size="11" fill="#5a4600" text-anchor="middle" textLength="20.8" lengthAdjust="spacingAndGlyphs" stroke="#5a4600" stroke-width="0.3">11%</text>
<text x="952.6" y="239.8" font-size="11" fill="#1d4a78" text-anchor="middle" textLength="29.1" lengthAdjust="spacingAndGlyphs" stroke="#1d4a78" stroke-width="0.3">Miete</text>
<text x="952.6" y="254.4" font-size="11" fill="#1d4a78" text-anchor="middle" textLength="20.8" lengthAdjust="spacingAndGlyphs" stroke="#1d4a78" stroke-width="0.3">44%</text>
<text x="869.8" y="339.6" font-size="11" fill="#663210" text-anchor="middle" textLength="65.4" lengthAdjust="spacingAndGlyphs" stroke="#663210" stroke-width="0.3">Nebenkosten</text>
<text x="869.8" y="354.2" font-size="11" fill="#663210" text-anchor="middle" textLength="20.8" lengthAdjust="spacingAndGlyphs" stroke="#663210" stroke-width="0.3">14%</text>
<text x="767.0" y="353.4" font-size="11" fill="#404040" text-anchor="middle" textLength="76.7" lengthAdjust="spacingAndGlyphs" stroke="#404040" stroke-width="0.3">Versicherungen</text>
<text x="767.0" y="368.0" font-size="11" fill="#404040" text-anchor="middle" textLength="14.7" lengthAdjust="spacingAndGlyphs" stroke="#404040" stroke-width="0.3">6%</text>
<rect x="0" y="0" width="1405" height="5" fill="#ececf0"/>
<rect x="0" y="0" width="1405" height="1" fill="#c4c4c8"/>
<rect x="0" y="2" width="1405" height="1" fill="#f6f6f8"/>
<rect x="0" y="0" width="16" height="791" fill="#e7e7eb"/>
<rect x="0" y="0" width="1" height="791" fill="#c8c8cc"/>
<rect x="1" y="25" width="6" height="766" fill="#efeff2"/>
<rect x="-1.5" y="5.5" width="14" height="18" fill="#ececf0" stroke="#7a7a7a" stroke-width="1"/>
<text x="1.8" y="18.6" font-size="10" fill="#333" textLength="5.0" lengthAdjust="spacingAndGlyphs" stroke="#333" stroke-width="0.3">2</text>
<rect x="16" y="5" width="1387" height="19" fill="#e5e5e9"/>
<rect x="1306" y="5" width="80" height="19" fill="#d2d2d6"/>
<rect x="1306" y="23" width="81" height="2" fill="#1f4d38"/>
<rect x="1306" y="5" width="1" height="19" fill="#98989c"/>
<rect x="1386" y="5" width="1" height="19" fill="#98989c"/>
<rect x="16" y="24" width="1387" height="1" fill="#868688"/>
<defs><linearGradient id="tri" x1="0" y1="0" x2="1" y2="1"><stop offset="0.3" stop-color="#d8d8dc"/><stop offset="1" stop-color="#9a9a9e"/></linearGradient></defs><path d="M38,9 L38,21 L26,21 Z" fill="#b0b0b4"/>
<rect x="41" y="6" width="1" height="18" fill="#98989c"/>
<rect x="121" y="6" width="1" height="18" fill="#98989c"/>
<rect x="214" y="6" width="1" height="18" fill="#98989c"/>
<rect x="233" y="6" width="1" height="18" fill="#98989c"/>
<rect x="313" y="6" width="1" height="18" fill="#98989c"/>
<rect x="416" y="6" width="1" height="18" fill="#98989c"/>
<rect x="517" y="6" width="1" height="18" fill="#98989c"/>
<rect x="616" y="6" width="1" height="18" fill="#98989c"/>
<rect x="620" y="6" width="1" height="18" fill="#98989c"/>
<rect x="637" y="6" width="1" height="18" fill="#98989c"/>
<rect x="717" y="6" width="1" height="18" fill="#98989c"/>
<rect x="823" y="6" width="1" height="18" fill="#98989c"/>
<rect x="943" y="6" width="1" height="18" fill="#98989c"/>
<rect x="1023" y="6" width="1" height="18" fill="#98989c"/>
<rect x="1122" y="6" width="1" height="18" fill="#98989c"/>
<rect x="1202" y="6" width="1" height="18" fill="#98989c"/>
<rect x="1306" y="6" width="1" height="18" fill="#98989c"/>
<rect x="1386" y="6" width="1" height="18" fill="#98989c"/>
<text x="81.5" y="18.7" font-size="11.8" fill="#1a1a1a" text-anchor="middle" textLength="7.6" lengthAdjust="spacingAndGlyphs" stroke="#1a1a1a" stroke-width="0.2">A</text>
<text x="168.0" y="18.7" font-size="11.8" fill="#1a1a1a" text-anchor="middle" textLength="7.2" lengthAdjust="spacingAndGlyphs" stroke="#1a1a1a" stroke-width="0.2">B</text>
<text x="224.0" y="18.7" font-size="11.8" fill="#1a1a1a" text-anchor="middle" textLength="7.0" lengthAdjust="spacingAndGlyphs" stroke="#1a1a1a" stroke-width="0.2">C</text>
<text x="273.5" y="18.7" font-size="11.8" fill="#1a1a1a" text-anchor="middle" textLength="8.1" lengthAdjust="spacingAndGlyphs" stroke="#1a1a1a" stroke-width="0.2">D</text>
<text x="365.0" y="18.7" font-size="11.8" fill="#1a1a1a" text-anchor="middle" textLength="6.4" lengthAdjust="spacingAndGlyphs" stroke="#1a1a1a" stroke-width="0.2">E</text>
<text x="467.0" y="18.7" font-size="11.8" fill="#1a1a1a" text-anchor="middle" textLength="6.1" lengthAdjust="spacingAndGlyphs" stroke="#1a1a1a" stroke-width="0.2">F</text>
<text x="569.0" y="18.7" font-size="11.8" fill="#1a1a1a" text-anchor="middle" textLength="8.3" lengthAdjust="spacingAndGlyphs" stroke="#1a1a1a" stroke-width="0.2">G</text>
<text x="629.0" y="18.7" font-size="11.8" fill="#1a1a1a" text-anchor="middle" textLength="3.3" lengthAdjust="spacingAndGlyphs" stroke="#1a1a1a" stroke-width="0.2">I</text>
<text x="677.5" y="18.7" font-size="11.8" fill="#1a1a1a" text-anchor="middle" textLength="4.2" lengthAdjust="spacingAndGlyphs" stroke="#1a1a1a" stroke-width="0.2">J</text>
<text x="770.5" y="18.7" font-size="11.8" fill="#1a1a1a" text-anchor="middle" textLength="6.9" lengthAdjust="spacingAndGlyphs" stroke="#1a1a1a" stroke-width="0.2">K</text>
<text x="883.5" y="18.7" font-size="11.8" fill="#1a1a1a" text-anchor="middle" textLength="5.5" lengthAdjust="spacingAndGlyphs" stroke="#1a1a1a" stroke-width="0.2">L</text>
<text x="983.5" y="18.7" font-size="11.8" fill="#1a1a1a" text-anchor="middle" textLength="11.3" lengthAdjust="spacingAndGlyphs" stroke="#1a1a1a" stroke-width="0.2">M</text>
<text x="1073.0" y="18.7" font-size="11.8" fill="#1a1a1a" text-anchor="middle" textLength="8.5" lengthAdjust="spacingAndGlyphs" stroke="#1a1a1a" stroke-width="0.2">N</text>
<text x="1162.5" y="18.7" font-size="11.8" fill="#1a1a1a" text-anchor="middle" textLength="8.7" lengthAdjust="spacingAndGlyphs" stroke="#1a1a1a" stroke-width="0.2">O</text>
<text x="1254.5" y="18.7" font-size="11.8" fill="#1a1a1a" text-anchor="middle" textLength="6.8" lengthAdjust="spacingAndGlyphs" stroke="#1a1a1a" stroke-width="0.2">P</text>
<text x="1346.5" y="18.7" font-size="11.8" fill="#1a1a1a" text-anchor="middle" textLength="8.9" lengthAdjust="spacingAndGlyphs" stroke="#1a1a1a" stroke-width="0.2">Q</text>
<rect x="16" y="25" width="25" height="766" fill="#e5e5e9"/>
<rect x="16" y="393" width="25" height="21" fill="#d2d2d6"/>
<rect x="41" y="24" width="1" height="767" fill="#8c8c8c"/>
<rect x="40" y="393" width="2" height="22" fill="#1f4a38"/>
<rect x="16" y="52" width="25" height="1" fill="#b8b8bc"/>
<text x="28.5" y="45.8" font-size="13" fill="#222" text-anchor="middle" textLength="7.1" lengthAdjust="spacingAndGlyphs" stroke="#222" stroke-width="0.3">1</text>
<rect x="16" y="72" width="25" height="1" fill="#b8b8bc"/>
<text x="28.5" y="68.1" font-size="13" fill="#222" text-anchor="middle" textLength="7.1" lengthAdjust="spacingAndGlyphs" stroke="#222" stroke-width="0.3">2</text>
<rect x="16" y="92" width="25" height="1" fill="#b8b8bc"/>
<text x="28.5" y="88.1" font-size="13" fill="#222" text-anchor="middle" textLength="7.1" lengthAdjust="spacingAndGlyphs" stroke="#222" stroke-width="0.3">3</text>
<rect x="16" y="132" width="25" height="1" fill="#b8b8bc"/>
<text x="28.5" y="128.1" font-size="13" fill="#222" text-anchor="middle" textLength="7.1" lengthAdjust="spacingAndGlyphs" stroke="#222" stroke-width="0.3">4</text>
<rect x="16" y="152" width="25" height="1" fill="#b8b8bc"/>
<text x="28.5" y="148.1" font-size="13" fill="#222" text-anchor="middle" textLength="7.1" lengthAdjust="spacingAndGlyphs" stroke="#222" stroke-width="0.3">5</text>
<rect x="16" y="172" width="25" height="1" fill="#b8b8bc"/>
<text x="28.5" y="168.1" font-size="13" fill="#222" text-anchor="middle" textLength="7.1" lengthAdjust="spacingAndGlyphs" stroke="#222" stroke-width="0.3">6</text>
<rect x="16" y="192" width="25" height="1" fill="#b8b8bc"/>
<text x="28.5" y="188.1" font-size="13" fill="#222" text-anchor="middle" textLength="7.1" lengthAdjust="spacingAndGlyphs" stroke="#222" stroke-width="0.3">7</text>
<rect x="16" y="212" width="25" height="1" fill="#b8b8bc"/>
<text x="28.5" y="208.1" font-size="13" fill="#222" text-anchor="middle" textLength="7.1" lengthAdjust="spacingAndGlyphs" stroke="#222" stroke-width="0.3">8</text>
<rect x="16" y="232" width="25" height="1" fill="#b8b8bc"/>
<text x="28.5" y="228.1" font-size="13" fill="#222" text-anchor="middle" textLength="7.1" lengthAdjust="spacingAndGlyphs" stroke="#222" stroke-width="0.3">9</text>
<rect x="16" y="252" width="25" height="1" fill="#b8b8bc"/>
<text x="28.5" y="248.1" font-size="13" fill="#222" text-anchor="middle" textLength="14.1" lengthAdjust="spacingAndGlyphs" stroke="#222" stroke-width="0.3">10</text>
<rect x="16" y="272" width="25" height="1" fill="#b8b8bc"/>
<text x="28.5" y="268.1" font-size="13" fill="#222" text-anchor="middle" textLength="14.1" lengthAdjust="spacingAndGlyphs" stroke="#222" stroke-width="0.3">11</text>
<rect x="16" y="292" width="25" height="1" fill="#b8b8bc"/>
<text x="28.5" y="288.1" font-size="13" fill="#222" text-anchor="middle" textLength="14.1" lengthAdjust="spacingAndGlyphs" stroke="#222" stroke-width="0.3">12</text>
<rect x="16" y="312" width="25" height="1" fill="#b8b8bc"/>
<text x="28.5" y="308.1" font-size="13" fill="#222" text-anchor="middle" textLength="14.1" lengthAdjust="spacingAndGlyphs" stroke="#222" stroke-width="0.3">13</text>
<rect x="16" y="332" width="25" height="1" fill="#b8b8bc"/>
<text x="28.5" y="328.1" font-size="13" fill="#222" text-anchor="middle" textLength="14.1" lengthAdjust="spacingAndGlyphs" stroke="#222" stroke-width="0.3">14</text>
<rect x="16" y="352" width="25" height="1" fill="#b8b8bc"/>
<text x="28.5" y="348.1" font-size="13" fill="#222" text-anchor="middle" textLength="14.1" lengthAdjust="spacingAndGlyphs" stroke="#222" stroke-width="0.3">15</text>
<rect x="16" y="372" width="25" height="1" fill="#b8b8bc"/>
<text x="28.5" y="368.1" font-size="13" fill="#222" text-anchor="middle" textLength="14.1" lengthAdjust="spacingAndGlyphs" stroke="#222" stroke-width="0.3">16</text>
<rect x="16" y="392" width="25" height="1" fill="#b8b8bc"/>
<text x="28.5" y="388.1" font-size="13" fill="#222" text-anchor="middle" textLength="14.1" lengthAdjust="spacingAndGlyphs" stroke="#222" stroke-width="0.3">17</text>
<rect x="16" y="414" width="25" height="1" fill="#b8b8bc"/>
<text x="28.5" y="410.1" font-size="13" fill="#222" text-anchor="middle" textLength="14.1" lengthAdjust="spacingAndGlyphs" stroke="#222" stroke-width="0.3">18</text>
<rect x="16" y="434" width="25" height="1" fill="#b8b8bc"/>
<text x="28.5" y="430.1" font-size="13" fill="#222" text-anchor="middle" textLength="14.1" lengthAdjust="spacingAndGlyphs" stroke="#222" stroke-width="0.3">19</text>
<rect x="16" y="454" width="25" height="1" fill="#b8b8bc"/>
<text x="28.5" y="450.1" font-size="13" fill="#222" text-anchor="middle" textLength="14.1" lengthAdjust="spacingAndGlyphs" stroke="#222" stroke-width="0.3">20</text>
<rect x="16" y="474" width="25" height="1" fill="#b8b8bc"/>
<text x="28.5" y="470.1" font-size="13" fill="#222" text-anchor="middle" textLength="14.1" lengthAdjust="spacingAndGlyphs" stroke="#222" stroke-width="0.3">21</text>
<rect x="16" y="494" width="25" height="1" fill="#b8b8bc"/>
<text x="28.5" y="490.1" font-size="13" fill="#222" text-anchor="middle" textLength="14.1" lengthAdjust="spacingAndGlyphs" stroke="#222" stroke-width="0.3">22</text>
<rect x="16" y="514" width="25" height="1" fill="#b8b8bc"/>
<text x="28.5" y="510.1" font-size="13" fill="#222" text-anchor="middle" textLength="14.1" lengthAdjust="spacingAndGlyphs" stroke="#222" stroke-width="0.3">23</text>
<rect x="16" y="534" width="25" height="1" fill="#b8b8bc"/>
<text x="28.5" y="530.1" font-size="13" fill="#222" text-anchor="middle" textLength="14.1" lengthAdjust="spacingAndGlyphs" stroke="#222" stroke-width="0.3">24</text>
<rect x="16" y="554" width="25" height="1" fill="#b8b8bc"/>
<text x="28.5" y="550.1" font-size="13" fill="#222" text-anchor="middle" textLength="14.1" lengthAdjust="spacingAndGlyphs" stroke="#222" stroke-width="0.3">25</text>
<rect x="16" y="574" width="25" height="1" fill="#b8b8bc"/>
<text x="28.5" y="570.1" font-size="13" fill="#222" text-anchor="middle" textLength="14.1" lengthAdjust="spacingAndGlyphs" stroke="#222" stroke-width="0.3">26</text>
<rect x="16" y="594" width="25" height="1" fill="#b8b8bc"/>
<text x="28.5" y="590.1" font-size="13" fill="#222" text-anchor="middle" textLength="14.1" lengthAdjust="spacingAndGlyphs" stroke="#222" stroke-width="0.3">27</text>
<rect x="16" y="614" width="25" height="1" fill="#b8b8bc"/>
<text x="28.5" y="610.1" font-size="13" fill="#222" text-anchor="middle" textLength="14.1" lengthAdjust="spacingAndGlyphs" stroke="#222" stroke-width="0.3">28</text>
<rect x="16" y="634" width="25" height="1" fill="#b8b8bc"/>
<text x="28.5" y="630.1" font-size="13" fill="#222" text-anchor="middle" textLength="14.1" lengthAdjust="spacingAndGlyphs" stroke="#222" stroke-width="0.3">29</text>
<rect x="16" y="654" width="25" height="1" fill="#b8b8bc"/>
<text x="28.5" y="650.1" font-size="13" fill="#222" text-anchor="middle" textLength="14.1" lengthAdjust="spacingAndGlyphs" stroke="#222" stroke-width="0.3">30</text>
<rect x="16" y="674" width="25" height="1" fill="#b8b8bc"/>
<text x="28.5" y="670.1" font-size="13" fill="#222" text-anchor="middle" textLength="14.1" lengthAdjust="spacingAndGlyphs" stroke="#222" stroke-width="0.3">31</text>
<rect x="16" y="694" width="25" height="1" fill="#b8b8bc"/>
<text x="28.5" y="690.1" font-size="13" fill="#222" text-anchor="middle" textLength="14.1" lengthAdjust="spacingAndGlyphs" stroke="#222" stroke-width="0.3">32</text>
<rect x="16" y="714" width="25" height="1" fill="#b8b8bc"/>
<text x="28.5" y="710.1" font-size="13" fill="#222" text-anchor="middle" textLength="14.1" lengthAdjust="spacingAndGlyphs" stroke="#222" stroke-width="0.3">33</text>
<rect x="16" y="734" width="25" height="1" fill="#b8b8bc"/>
<text x="28.5" y="730.1" font-size="13" fill="#222" text-anchor="middle" textLength="14.1" lengthAdjust="spacingAndGlyphs" stroke="#222" stroke-width="0.3">34</text>
<rect x="16" y="754" width="25" height="1" fill="#b8b8bc"/>
<text x="28.5" y="750.1" font-size="13" fill="#222" text-anchor="middle" textLength="14.1" lengthAdjust="spacingAndGlyphs" stroke="#222" stroke-width="0.3">35</text>
<rect x="16" y="774" width="25" height="1" fill="#b8b8bc"/>
<text x="28.5" y="770.1" font-size="13" fill="#222" text-anchor="middle" textLength="14.1" lengthAdjust="spacingAndGlyphs" stroke="#222" stroke-width="0.3">36</text>
<text x="28.5" y="790.1" font-size="13" fill="#222" text-anchor="middle" textLength="14.1" lengthAdjust="spacingAndGlyphs" stroke="#222" stroke-width="0.3">37</text>
<rect x="1306" y="392" width="81" height="2" fill="#1f4a38"/>
<rect x="1306" y="413" width="81" height="2" fill="#1f4a38"/>
<rect x="1306" y="392" width="2" height="23" fill="#1f4a38"/>
<rect x="1385" y="392" width="2" height="20" fill="#1f4a38"/>
<rect x="1384" y="411" width="5" height="5" fill="#1f4a38"/>
<path d="M1311.7,397.7 H1316.8999999999999 V401.9 H1321.1 V407.1 H1316.8999999999999 V411.3 H1311.7 V407.1 H1307.5 V401.9 H1311.7 Z" fill="#fff" stroke="#000" stroke-width="1.8" stroke-linejoin="miter"/>
<rect x="0" y="790" width="1405" height="1" fill="#c8c8cc"/>
<rect x="2" y="474" width="1401" height="1" fill="#6e6e6e"/>
<rect x="1403" y="0" width="2" height="791" fill="#d8d8dc"/>
</svg></body></html>
